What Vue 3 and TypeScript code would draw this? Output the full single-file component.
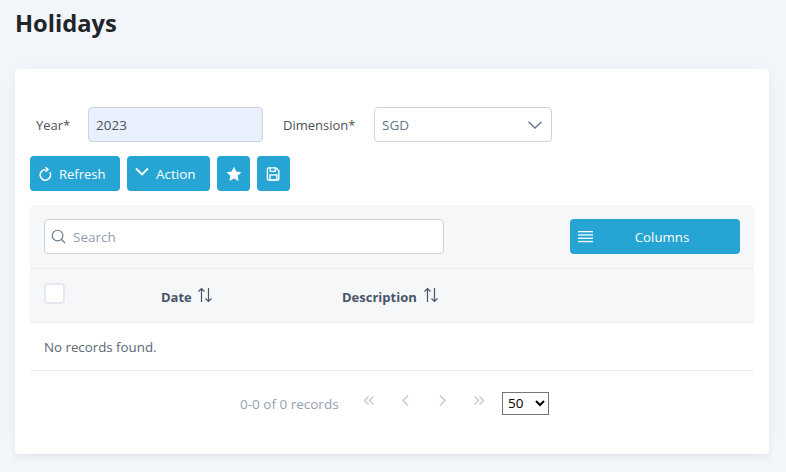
<script setup lang="ts">
const pages: string[] = ['first', 'prev', 'next', 'last']
</script>

<template>
  <div class="page">
    <h1 class="title">Holidays</h1>
    <section class="card">
      <div class="form-row">
        <label class="lbl lbl-year">Year*</label>
        <input class="input year" value="2023" />
        <label class="lbl lbl-dim">Dimension*</label>
        <div class="input dim">
          <span>SGD</span>
          <svg width="16" height="16" viewBox="0 0 16 16" fill="none" stroke="#64748b" stroke-width="1.3"><path d="M1.5 4.8 8 11l6.5-6.2" /></svg>
        </div>
      </div>
      <div class="actions">
        <button class="btn refresh">
          <svg width="15" height="16" viewBox="0 0 16 16" fill="none" stroke="#fff" stroke-width="1.7"><path d="M12.6 6a5.6 5.6 0 1 1-4.4-2.6" /><path d="M8 .8l2.6 2.5L8 5.6" /></svg>
          <span>Refresh</span>
        </button>
        <button class="btn action">
          <svg class="chev" width="16" height="16" viewBox="0 0 16 16" fill="none" stroke="#fff" stroke-width="1.9"><path d="M2 4.5 8 10.5l6-6" /></svg>
          <span>Action</span>
        </button>
        <button class="btn icon">
          <svg width="16" height="16" viewBox="0 0 16 16" fill="#fff"><path d="M8 .7l2.3 4.8 5.2.7-3.8 3.6.9 5.2L8 12.5 3.4 15l.9-5.2L.5 6.2l5.2-.7z" /></svg>
        </button>
        <button class="btn icon">
          <svg width="15" height="16" viewBox="0 0 16 16" fill="none" stroke="#fff" stroke-width="1.5"><path d="M2.5 1.5h8.2l3 3v8.6a1.4 1.4 0 0 1-1.4 1.4H2.9a1.4 1.4 0 0 1-1.4-1.4V2.5a1 1 0 0 1 1-1z" /><path d="M4.5 1.8v3.4h5.5V1.8" /><rect x="4.2" y="9" width="7.4" height="5.2" /></svg>
        </button>
      </div>
      <div class="table">
        <div class="toolbar">
          <div class="search">
            <svg width="15" height="15" viewBox="0 0 16 16" fill="none" stroke="#64748b" stroke-width="1.2"><circle cx="7" cy="7" r="5.7" /><path d="M11.2 11.2 15 15" /></svg>
            <span>Search</span>
          </div>
          <button class="btn columns">
            <svg width="15" height="12" viewBox="0 0 15 12" fill="#fff"><rect y="0" width="15" height="1.3" /><rect y="3.3" width="15" height="1.3" /><rect y="6.6" width="15" height="1.3" /><rect y="9.9" width="15" height="1.3" /></svg>
            <span class="col-text">Columns</span>
          </button>
        </div>
        <div class="head">
          <div class="check-cell"><span class="check"></span></div>
          <div class="th th-date">Date <svg class="sort" width="16" height="16" viewBox="0 0 16 16" fill="none" stroke="#475569" stroke-width="1.2"><path d="M4.5 15V1.5M1.5 4.5l3-3 3 3M11.5 1v13.5M8.5 11.5l3 3 3-3" /></svg></div>
          <div class="th th-desc">Description <svg class="sort" width="16" height="16" viewBox="0 0 16 16" fill="none" stroke="#475569" stroke-width="1.2"><path d="M4.5 15V1.5M1.5 4.5l3-3 3 3M11.5 1v13.5M8.5 11.5l3 3 3-3" /></svg></div>
        </div>
        <div class="empty">No records found.</div>
        <div class="pager">
          <span class="count">0-0 of 0 records</span>
          <span v-for="p in pages" :key="p" class="pg">
            <svg width="14" height="14" viewBox="0 0 14 14" fill="none" stroke="#c3cad6" stroke-width="1.4">
              <path v-if="p === 'first'" d="M6.5 2.5 2.5 6.5l4 4M11.5 2.5l-4 4 4 4" />
              <path v-else-if="p === 'prev'" d="M9 1.5 4 6.5l5 5" />
              <path v-else-if="p === 'next'" d="M5 1.5l5 5-5 5" />
              <path v-else d="M2.5 2.5l4 4-4 4M7.5 2.5l4 4-4 4" />
            </svg>
          </span>
          <select class="size"><option>50</option></select>
        </div>
      </div>
    </section>
  </div>
</template>

<style>
html, body { margin: 0; background: #f3f6fa; }
</style>

<style scoped>
.page {
  box-sizing: border-box;
  width: 786px;
  height: 472px;
  overflow: hidden;
  padding: 0 17px 0 15px;
  background: #f3f6fa;
  font-family: "Open Sans", "Noto Sans", sans-serif;
  font-size: 13.5px;
  color: #495057;
}
.title {
  margin: 0;
  padding-top: 6px;
  height: 69px;
  box-sizing: border-box;
  font-size: 23.7px;
  line-height: 34px;
  font-weight: 700;
  color: #212529;
}
.card {
  height: 385px;
  box-sizing: border-box;
  padding: 38px 15px 0;
  background: #fff;
  border-radius: 4px;
  box-shadow: 0 3px 6px rgba(0, 0, 0, .05), 0 0 22px rgba(0, 0, 0, .04);
}
.form-row { display: flex; align-items: center; height: 35px; }
.lbl { color: #495057; font-size: 13px; }
.lbl-year { margin-left: 6px; width: 52px; }
.lbl-dim { margin-left: 20px; width: 91px; }
.input {
  box-sizing: border-box;
  height: 35px;
  border: 1px solid #ced4da;
  border-radius: 4px;
  padding: 0 7px;
  font: inherit;
  color: #495057;
}
.year { width: 175px; background: #e8f0fe; outline: none; }
.dim {
  width: 178px;
  display: flex;
  align-items: center;
  justify-content: space-between;
  padding-right: 8px;
  color: #64748b;
}
.actions { display: flex; gap: 7px; margin-top: 14px; }
.btn {
  box-sizing: border-box;
  height: 35px;
  display: flex;
  align-items: center;
  border: 0;
  border-radius: 4px;
  background: #26a5d4;
  color: #fff;
  font: inherit;
  padding: 0;
}
.refresh { width: 90px; padding-left: 8px; gap: 6px; font-size: 13px; }
.action { width: 83px; padding-left: 7px; gap: 6px; }
.chev { margin-top: -3px; }
.icon { width: 33px; justify-content: center; }
.table { margin-top: 14px; }
.toolbar {
  height: 64px;
  box-sizing: border-box;
  padding: 14px 14px 0;
  display: flex;
  justify-content: space-between;
  background: #f6f7f9;
  border-bottom: 1px solid #edf0f3;
  border-radius: 4px 4px 0 0;
}
.search {
  box-sizing: border-box;
  width: 400px;
  height: 35px;
  display: flex;
  align-items: center;
  gap: 7px;
  padding: 0 6px;
  background: #fff;
  border: 1px solid #ced4da;
  border-radius: 4px;
  color: #8f9bae;
}
.columns { width: 170px; padding-left: 8px; }
.col-text { flex: 1; text-align: center; padding-right: 9px; font-size: 13.3px; }
.head {
  height: 54px;
  box-sizing: border-box;
  padding-top: 2px;
  display: flex;
  align-items: center;
  background: #f6f7f9;
  border-bottom: 1px solid #edf0f3;
  color: #475569;
  font-weight: 700;
  font-size: 13px;
}
.check-cell { width: 131px; padding-left: 14px; box-sizing: border-box; }
.check {
  display: block;
  width: 21px;
  height: 21px;
  box-sizing: border-box;
  margin-top: -6px;
  background: #fff;
  border: 2px solid #e5e8ee;
  border-radius: 4px;
}
.th { display: flex; align-items: center; gap: 5px; }
.th-date { width: 181px; }
.th-desc { gap: 6px; }
.sort { margin-top: -3px; }
.empty {
  height: 48px;
  box-sizing: border-box;
  padding: 15px 14px 0;
  font-size: 13.3px;
  color: #5b6778;
  border-bottom: 1px solid #e9ecef;
}
.pager {
  display: flex;
  align-items: center;
  height: 64px;
  padding-left: 210px;
  color: #94a0b4;
}
.count { width: 111px; padding-top: 2px; }
.pg { width: 36.5px; height: 14px; display: flex; justify-content: center; margin-top: -5px; }
.size {
  margin-left: 5px;
  width: 47px;
  height: 23px;
  padding-left: 1px;
  font-family: "Open Sans", sans-serif;
  font-size: 13.5px;
  background: #fff;
  border: 1px solid #767676;
  color: #000;
}
</style>
